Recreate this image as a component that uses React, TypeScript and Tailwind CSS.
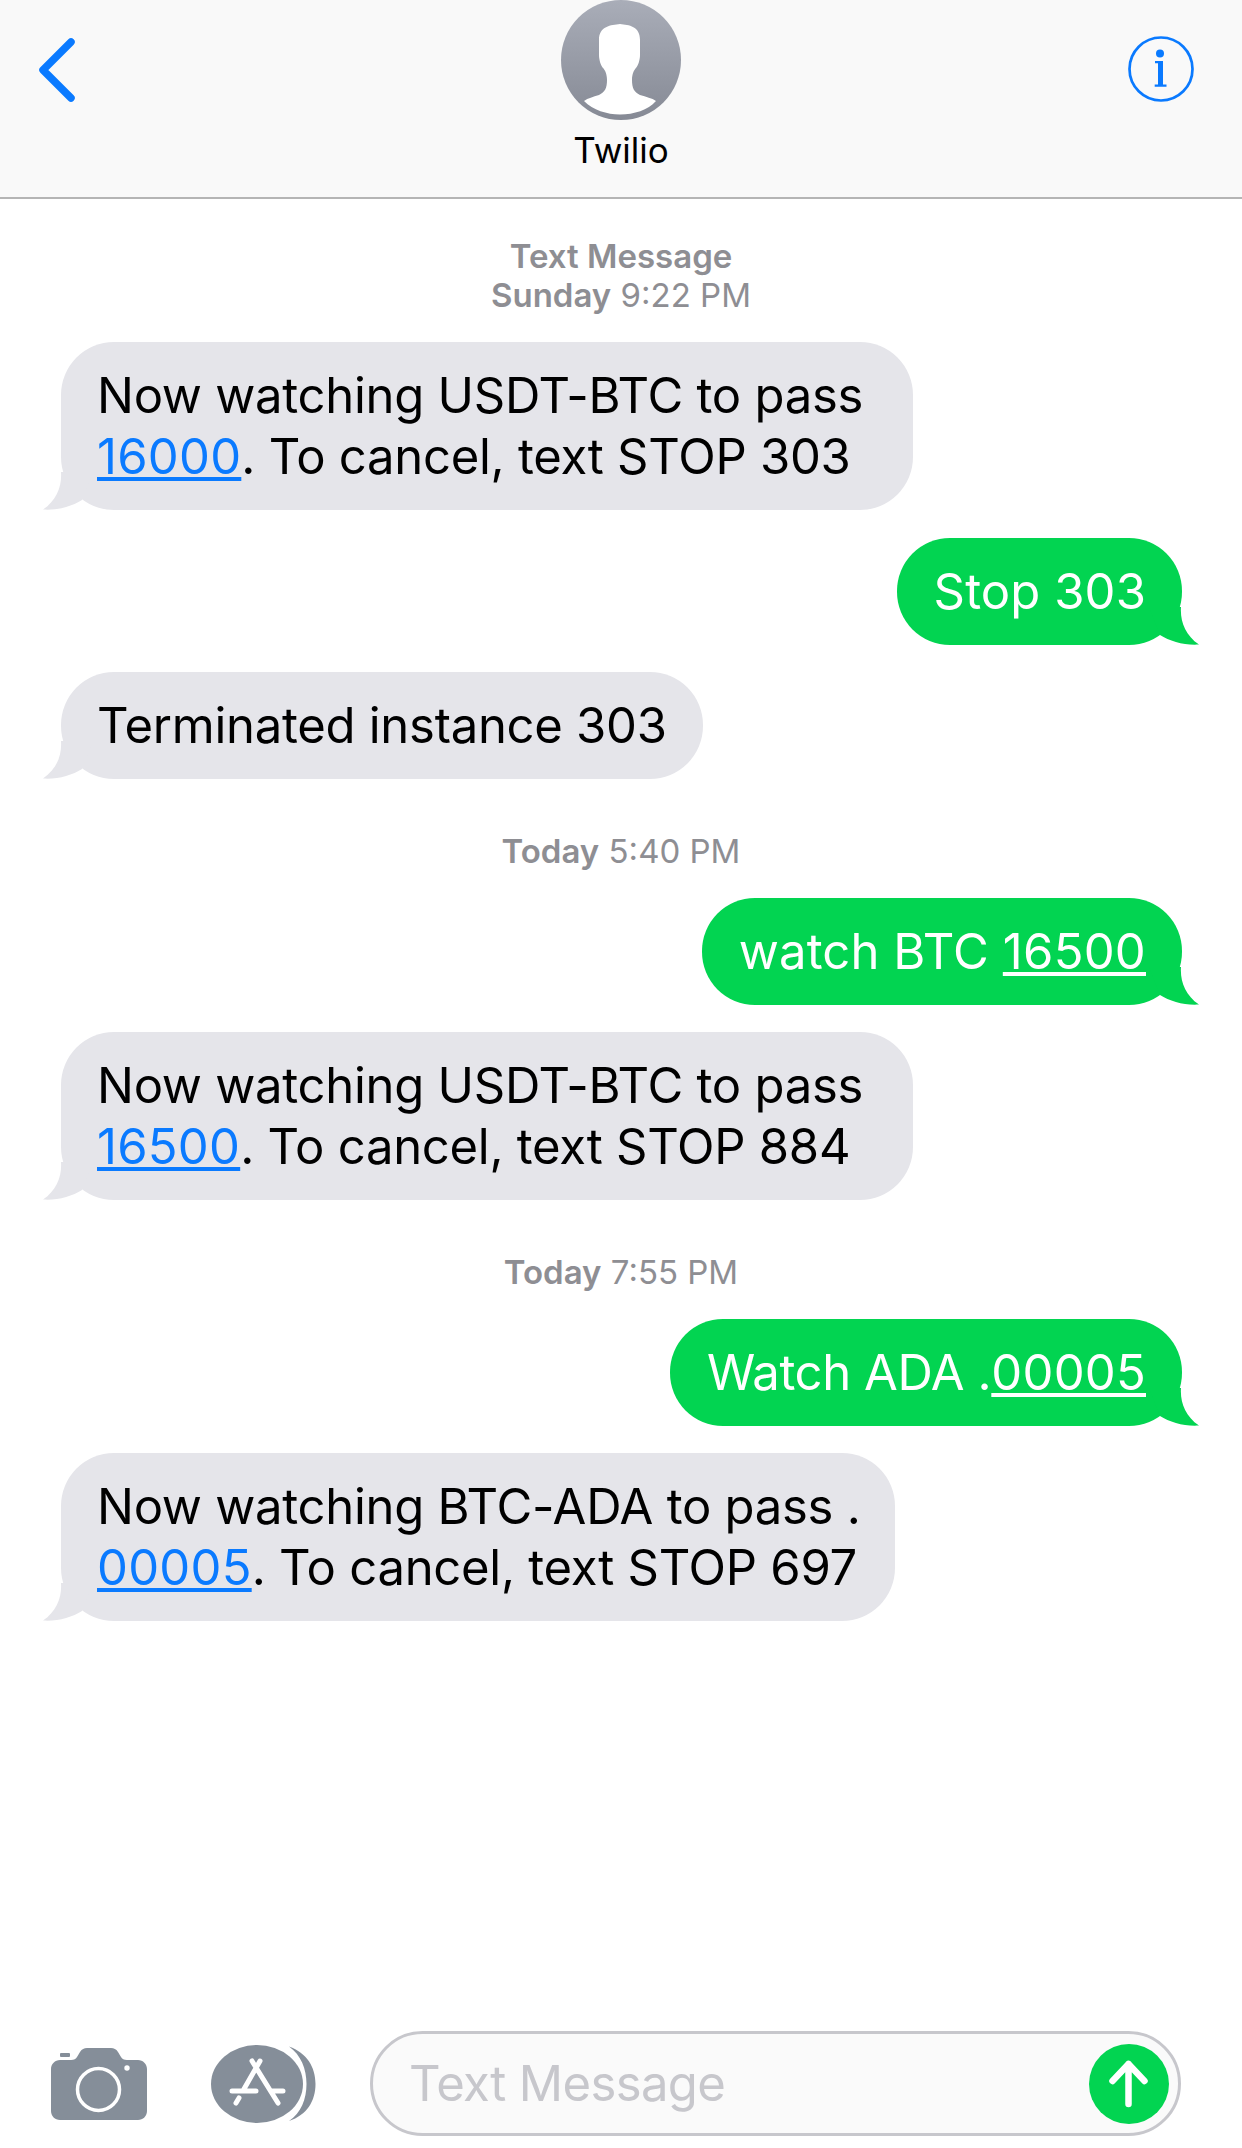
const FONT = "font-['Inter','Liberation_Sans',sans-serif]";

function TailLeft({ color }: { color: string }) {
  return (
    <svg className="absolute left-[-18px] bottom-0" width="50" height="38" viewBox="0 0 50 38">
      <path d="M18 0 C19 14 14 28 0 37.5 C14 38.5 29 34.5 39 28 L50 0 Z" fill={color} />
    </svg>
  );
}

function TailRight({ color }: { color: string }) {
  return (
    <svg className="absolute right-[-17px] bottom-0" width="50" height="38" viewBox="0 0 50 38">
      <path d="M32 0 C31 14 36 28 50 37.5 C36 38.5 21 34.5 11 28 L0 0 Z" fill={color} />
    </svg>
  );
}

function Received({ children, width }: { children: React.ReactNode; width: string }) {
  return (
    <div className={`relative ml-[61px] rounded-[53px] bg-[#e5e5ea] py-[23px] pl-[36px] text-black ${width}`}>
      <TailLeft color="#e5e5ea" />
      <div className="relative">{children}</div>
    </div>
  );
}

function Sent({ children }: { children: React.ReactNode }) {
  return (
    <div className="relative mr-[60px] self-end rounded-[53px] bg-[#02d451] py-[23px] pl-[37px] pr-[36px] tracking-[0.1px] text-white">
      <TailRight color="#02d451" />
      <div className="relative whitespace-nowrap">{children}</div>
    </div>
  );
}

function Link({ children }: { children: React.ReactNode }) {
  return (
    <span className="text-[#0a7aff] underline decoration-[4px] underline-offset-[3px] tracking-[0.25px]">{children}</span>
  );
}

function WhiteLink({ children }: { children: React.ReactNode }) {
  return <span className="underline decoration-[4px] underline-offset-[3px] tracking-[0.25px]">{children}</span>;
}

function Stamp({ bold, rest }: { bold: string; rest: string }) {
  return (
    <div className="text-center text-[33px] leading-[39px] tracking-normal text-[#8e8e93]">
      <span className="font-semibold">{bold}</span> {rest}
    </div>
  );
}

export default function App() {
  return (
    <div
      className={`flex h-[2148px] w-[1242px] flex-col overflow-hidden bg-white text-[49px] leading-[61px] tracking-[-0.27px] ${FONT}`}
    >
      {/* Nav bar */}
      <header className="flex h-[199px] shrink-0 items-start border-b-2 border-[#b5b5b5] bg-[#f9f9f9]">
        <div className="flex-1">
          <svg className="ml-[38px] mt-[38px]" width="38" height="64" viewBox="0 0 38 64" fill="none">
            <path d="M33 4 L5 32 L33 60" stroke="#0a7aff" strokeWidth="7.5" strokeLinecap="round" strokeLinejoin="round" />
          </svg>
        </div>
        <div className="flex flex-col items-center">
          <svg width="120" height="120" viewBox="0 0 120 120">
            <defs>
              <linearGradient id="av" x1="0" y1="0" x2="0" y2="1">
                <stop offset="0" stopColor="#a9adb8" />
                <stop offset="1" stopColor="#868a95" />
              </linearGradient>
            </defs>
            <circle cx="60" cy="60" r="60" fill="url(#av)" />
            <path
              d="M59 24 C50 25 38 26 38 40 L38 55 C38 60 40 66 42 68 C44 70 46 74 46 80 C46 88 44 92 38 95 C32 97 27 98 23 101 C32 110 46 114.5 59 114.5 C73 114.5 87 110 95 101 C91 98 85 97 79 95 C73 92 71 88 71 80 C71 74 73 70 75 68 C77 66 79 60 79 55 L79 40 C79 26 68 25 59 24 Z"
              fill="#ffffff"
            />
          </svg>
          <div className="mt-[10px] text-[35px] leading-[40px] tracking-normal text-black">Twilio</div>
        </div>
        <div className="flex flex-1 justify-end">
          <svg className="mr-[48px] mt-[36px]" width="66" height="66" viewBox="0 0 66 66" fill="none">
            <circle cx="33" cy="33" r="31.5" stroke="#0a7aff" strokeWidth="2.7" />
            <circle cx="32" cy="17.5" r="4" fill="#0a7aff" />
            <path d="M27 25 H35 V48.5 H38.5 V50.7 H26.7 V48.5 H30 V27.2 H27 Z" fill="#0a7aff" />
          </svg>
        </div>
      </header>

      {/* Conversation */}
      <main className="flex flex-1 flex-col">
        <div className="mb-[27px] mt-[38px]">
          <div className="text-center text-[33px] font-semibold leading-[39px] tracking-normal text-[#8e8e93]">
            Text Message
          </div>
          <Stamp bold="Sunday" rest="9:22 PM" />
        </div>

        <Received width="w-[852px]">
          Now watching USDT-BTC to pass
          <br />
          <Link>16000</Link>. To cancel, text STOP 303
        </Received>
        <div className="mt-[28px] flex flex-col">
          <Sent>Stop 303</Sent>
        </div>
        <div className="mt-[27px]">
          <Received width="w-[642px]">Terminated instance 303</Received>
        </div>

        <div className="mb-[27px] mt-[53px]">
          <Stamp bold="Today" rest="5:40 PM" />
        </div>

        <div className="flex flex-col">
          <Sent>
            watch BTC <WhiteLink>16500</WhiteLink>
          </Sent>
        </div>
        <div className="mt-[27px]">
          <Received width="w-[852px]">
            Now watching USDT-BTC to pass
            <br />
            <Link>16500</Link>. To cancel, text STOP 884
          </Received>
        </div>

        <div className="mb-[27px] mt-[53px]">
          <Stamp bold="Today" rest="7:55 PM" />
        </div>

        <div className="flex flex-col">
          <Sent>
            <span className="tracking-[-0.4px]">Watch ADA .</span>
            <WhiteLink>00005</WhiteLink>
          </Sent>
        </div>
        <div className="mt-[27px]">
          <Received width="w-[834px]">
            Now watching BTC-ADA to pass .
            <br />
            <Link>00005</Link>. To cancel, text STOP 697
          </Received>
        </div>
      </main>

      {/* Input bar */}
      <footer className="flex shrink-0 items-center pb-[12px] pl-[51px] pr-[61px]">
        <svg width="96" height="72" viewBox="0 0 96 72">
          <path
            d="M9 12 H20 C23 12 25 11 26 9 L29 4 C31 1 33 0 36 0 H60 C63 0 65 1 67 4 L70 9 C71 11 73 12 76 12 H87 C92 12 96 16 96 21 V63 C96 68 92 72 87 72 H9 C4 72 0 68 0 63 V21 C0 16 4 12 9 12 Z"
            fill="#858e99"
          />
          <rect x="9" y="5" width="10" height="4" rx="1" fill="#858e99" />
          <circle cx="47.5" cy="41.5" r="21" fill="none" stroke="#ffffff" strokeWidth="3.5" />
          <circle cx="76" cy="20" r="2.7" fill="#ffffff" />
        </svg>
        <svg className="ml-[64px]" width="106" height="78" viewBox="0 0 106 78" fill="none">
          <ellipse cx="46" cy="39" rx="46" ry="39" fill="#858e99" />
          <path
            d="M78 1.5 C96 8 104.5 22 104.5 39 C104.5 56 96 70 78 76 C90 68 95.5 54 95.5 39 C95.5 24 90 10 78 1.5 Z"
            fill="#858e99"
          />
          <path
            d="M41 16 L67 58 M49 16 L33 44 M28 53 L25 58 M21 46 H45 M60 46 H72"
            stroke="#ffffff"
            strokeWidth="5"
            strokeLinecap="round"
          />
        </svg>
        <div className="ml-[53px] flex h-[105px] flex-1 items-center rounded-[53px] border-[3px] border-[#c7c7cc] bg-[#fafafa] pl-[36px] pr-[9px]">
          <span className="flex-1 tracking-[-0.6px] text-[#c7c7cc]">Text Message</span>
          <div className="h-[80px] w-[80px] rounded-full bg-[#02d451]">
            <svg width="80" height="80" viewBox="0 0 80 80" fill="none">
              <path d="M39.5 60 V20 M23.5 37 L39.5 20 L55.5 37" stroke="#ffffff" strokeWidth="6.5" strokeLinecap="round" strokeLinejoin="round" />
            </svg>
          </div>
        </div>
      </footer>
    </div>
  );
}
